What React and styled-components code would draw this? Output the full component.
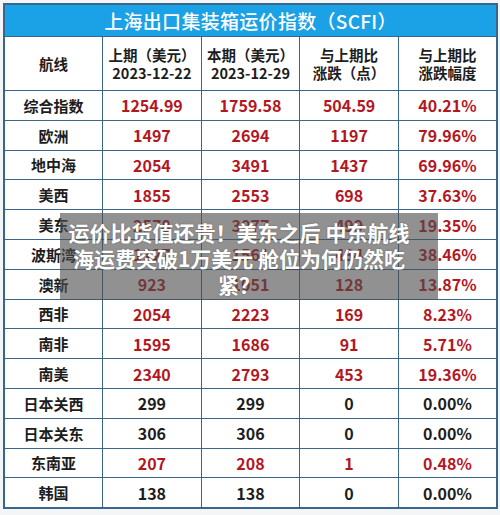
import styled, { createGlobalStyle } from 'styled-components';

const GlobalStyle = createGlobalStyle`
  body {
    margin: 0;
    background: #f3f5f7;
    font-family: "Noto Sans CJK SC", "Noto Sans", sans-serif;
  }
`;

const Page = styled.div`
  position: relative;
  width: 500px;
  height: 515px;
  padding: 3px 0 0 3px;
  box-sizing: border-box;
  overflow: hidden;
`;

const Table = styled.table`
  width: 495px;
  table-layout: fixed;
  border-collapse: collapse;
  background: #fff;
  border: 2px solid #3a668c;
`;

const TitleCell = styled.th`
  height: 31px;
  padding: 0;
  background: #1ba1e6;
  color: #fff;
  font-size: 19px;
  font-weight: 500;
  letter-spacing: 0.3px;
  border: 1.5px solid #3a668c;
`;

const HeadCell = styled.th`
  height: 53px;
  padding: 0;
  font-size: 14.5px;
  font-weight: 700;
  line-height: 18px;
  color: #1d1d1d;
  border: 1.5px solid #3a668c;
`;

const Cell = styled.td`
  height: 28.8px;
  padding: 0;
  text-align: center;
  font-size: ${p => (p.$label ? '15px' : '16px')};
  font-weight: 700;
  color: ${p => (p.$red ? '#b3171f' : '#1d1d1d')};
  border: 1.5px solid #3a668c;
`;

const Overlay = styled.div`
  position: absolute;
  left: 60px;
  top: 213px;
  width: 378px;
  height: 87px;
  box-sizing: border-box;
  padding: 6px 24px 0 4px;
  background: rgba(78, 78, 78, 0.62);
  color: #fff;
  font-size: 21px;
  font-weight: 700;
  line-height: 26px;
  text-align: center;
  text-shadow: 0 0 2px rgba(0, 0, 0, 0.3);
`;

const rows = [
  ['综合指数', '1254.99', '1759.58', '504.59', '40.21%', true],
  ['欧洲', '1497', '2694', '1197', '79.96%', true],
  ['地中海', '2054', '3491', '1437', '69.96%', true],
  ['美西', '1855', '2553', '698', '37.63%', true],
  ['美东', '2578', '3077', '499', '19.35%', true],
  ['波斯湾', '1127', '1561', '434', '38.46%', true],
  ['澳新', '923', '1051', '128', '13.87%', true],
  ['西非', '2054', '2223', '169', '8.23%', true],
  ['南非', '1595', '1686', '91', '5.71%', true],
  ['南美', '2340', '2793', '453', '19.36%', true],
  ['日本关西', '299', '299', '0', '0.00%', false],
  ['日本关东', '306', '306', '0', '0.00%', false],
  ['东南亚', '207', '208', '1', '0.48%', true],
  ['韩国', '138', '138', '0', '0.00%', false],
];

const App = () => (
  <Page>
    <GlobalStyle />
    <Table>
      <thead>
        <tr>
          <TitleCell colSpan={5}>上海出口集装箱运价指数（SCFI）</TitleCell>
        </tr>
        <tr>
          <HeadCell>航线</HeadCell>
          <HeadCell>上期（美元）<br />2023-12-22</HeadCell>
          <HeadCell>本期（美元）<br />2023-12-29</HeadCell>
          <HeadCell>与上期比<br />涨跌（点）</HeadCell>
          <HeadCell>与上期比<br />涨跌幅度</HeadCell>
        </tr>
      </thead>
      <tbody>
        {rows.map(([name, prev, cur, diff, pct, red]) => (
          <tr key={name}>
            <Cell $label>{name}</Cell>
            <Cell $red={red}>{prev}</Cell>
            <Cell $red={red}>{cur}</Cell>
            <Cell $red={red}>{diff}</Cell>
            <Cell $red={red}>{pct}</Cell>
          </tr>
        ))}
      </tbody>
    </Table>
    <Overlay>运价比货值还贵！美东之后 中东航线海运费突破1万美元 舱位为何仍然吃紧？</Overlay>
  </Page>
);

export default App;
